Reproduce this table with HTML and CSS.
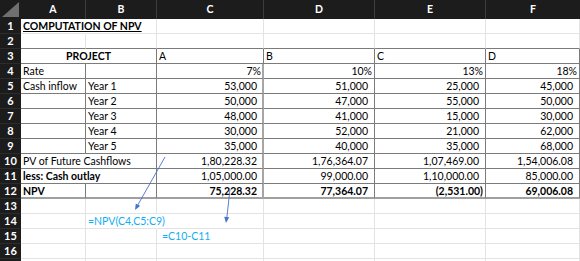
FILE: index.html
```html
<!DOCTYPE html>
<html>
<head>
<meta charset="utf-8">
<link rel="stylesheet" href="styles.css">
</head>
<body>
<div class="sheet">
  <div class="corner"><svg width="21" height="19" viewBox="0 0 21 19"><polygon points="2,17 19,17 19,2" fill="#6f6f6f"/></svg></div>
  <div class="ch">A</div><div class="ch">B</div><div class="ch">C</div><div class="ch">D</div><div class="ch">E</div><div class="ch last">F</div>

  <div class="rh">1</div>
  <div class="c noR title">COMPUTATION OF NPV</div><div class="c"></div><div class="c"></div><div class="c"></div><div class="c"></div><div class="c"></div>

  <div class="rh">2</div>
  <div class="c tb"></div><div class="c tb"></div><div class="c tb"></div><div class="c tb"></div><div class="c tb"></div><div class="c tb"></div>

  <div class="rh">3</div>
  <div class="t span2 bold center">PROJECT</div><div class="t">A</div><div class="t">B</div><div class="t">C</div><div class="t">D</div>

  <div class="rh">4</div>
  <div class="t">Rate</div><div class="t"></div><div class="t cR pct">7%</div><div class="t pct">10%</div><div class="t pct">13%</div><div class="t pct">18%</div>

  <div class="rh">5</div>
  <div class="t">Cash inflow</div><div class="t">Year 1</div><div class="t cR num">53,000</div><div class="t num">51,000</div><div class="t num">25,000</div><div class="t num">45,000</div>

  <div class="rh">6</div>
  <div class="t"></div><div class="t">Year 2</div><div class="t cR num">50,000</div><div class="t num">47,000</div><div class="t num">55,000</div><div class="t num">50,000</div>

  <div class="rh">7</div>
  <div class="t"></div><div class="t">Year 3</div><div class="t cR num">48,000</div><div class="t num">41,000</div><div class="t num">15,000</div><div class="t num">30,000</div>

  <div class="rh">8</div>
  <div class="t"></div><div class="t">Year 4</div><div class="t cR num">30,000</div><div class="t num">52,000</div><div class="t num">21,000</div><div class="t num">62,000</div>

  <div class="rh">9</div>
  <div class="t"></div><div class="t">Year 5</div><div class="t cR num">35,000</div><div class="t num">40,000</div><div class="t num">35,000</div><div class="t num">68,000</div>

  <div class="rh">10</div>
  <div class="t span2">PV of Future Cashflows</div><div class="t cR num">1,80,228.32</div><div class="t num">1,76,364.07</div><div class="t num">1,07,469.00</div><div class="t num">1,54,006.08</div>

  <div class="rh">11</div>
  <div class="t span2 bold">less: Cash outlay</div><div class="t cR num">1,05,000.00</div><div class="t num">99,000.00</div><div class="t num">1,10,000.00</div><div class="t num">85,000.00</div>

  <div class="rh">12</div>
  <div class="t lastrow bold">NPV</div><div class="t lastrow"></div><div class="t lastrow cR num bold">75,228.32</div><div class="t lastrow num bold">77,364.07</div><div class="t lastrow pct bold">(2,531.00)</div><div class="t lastrow num bold">69,006.08</div>

  <div class="rh">13</div>
  <div class="c"></div><div class="c"></div><div class="c"></div><div class="c"></div><div class="c"></div><div class="c"></div>

  <div class="rh">14</div>
  <div class="c"></div><div class="c noR formula">=NPV(C4,C5:C9)</div><div class="c"></div><div class="c"></div><div class="c"></div><div class="c"></div>

  <div class="rh">15</div>
  <div class="c"></div><div class="c"></div><div class="c formula f2">=C10-C11</div><div class="c"></div><div class="c"></div><div class="c"></div>

  <div class="rh">16</div>
  <div class="c"></div><div class="c"></div><div class="c"></div><div class="c"></div><div class="c"></div><div class="c"></div>

  <div class="rh"></div>
  <div class="c"></div><div class="c"></div><div class="c"></div><div class="c"></div><div class="c"></div><div class="c"></div>

  <svg class="arrows" width="580" height="261" viewBox="0 0 580 261">
    <line x1="165" y1="157" x2="137.5" y2="205.5" stroke="#4a72c8" stroke-width="0.9"/>
    <polygon points="135,210 140.1,206 135.8,203.6" fill="#4a72c8"/>
    <line x1="230" y1="189" x2="226.8" y2="218" stroke="#4a72c8" stroke-width="0.9"/>
    <polygon points="226,223 229.2,217.3 224.2,216.7" fill="#4a72c8"/>
  </svg>
</div>
</body>
</html>
```
FILE: styles.css
```css
html, body {
  margin: 0;
  padding: 0;
  background: #ffffff;
}
.sheet {
  position: relative;
  display: grid;
  grid-template-columns: 21px 65px 71px 107px 111px 111px 94px;
  grid-template-rows: 19px repeat(17, 15px);
  width: 580px;
  height: 261px;
  overflow: hidden;
  font-family: Lato, "Liberation Sans", sans-serif;
  font-size: 10.5px;
  color: #000;
}
.sheet > div {
  box-sizing: border-box;
  white-space: nowrap;
  line-height: 14px;
  padding: 0 2px;
}
.corner {
  background: #1c1c1c;
  padding: 0 !important;
}
.corner svg { display: block; }
.ch {
  background: #1c1c1c;
  color: #ffffff;
  text-align: center;
  line-height: 19px !important;
  border-right: 1px solid #3d3d3d;
  font-weight: bold;
}
.ch.last { border-right: none; }
.rh {
  background: #1c1c1c;
  color: #ffffff;
  font-weight: bold;
  text-align: center;
  border-bottom: 1px solid #2c2c2c;
  font-size: 11px;
}
.c {
  border-right: 1px solid #e3e3e3;
  border-bottom: 1px solid #e3e3e3;
}
.c.noR { border-right-color: transparent; }
.c.tb { border-bottom-color: #7b7b7b; }
.title {
  font-weight: bold;
  text-decoration: underline;
}
.t {
  border-right: 1px solid #7b7b7b;
  border-bottom: 1px solid #7b7b7b;
}
.t.cR { border-right: 2px solid #a6a6a6; }
.t.lastrow { border-bottom: 2px solid #a0a0a0; }
.span2 { grid-column: span 2; }
.bold { font-weight: bold; }
.center { text-align: center; }
.num { text-align: right; padding-right: 6px !important; }
.pct { text-align: right; padding-right: 2px !important; }
.t.cR.num { padding-right: 5px !important; }
.t.cR.pct { padding-right: 1px !important; }
.formula {
  color: #10aef0;
}
.f2 { padding-left: 5px !important; }
.arrows {
  position: absolute;
  left: 0;
  top: 0;
  pointer-events: none;
}
```
